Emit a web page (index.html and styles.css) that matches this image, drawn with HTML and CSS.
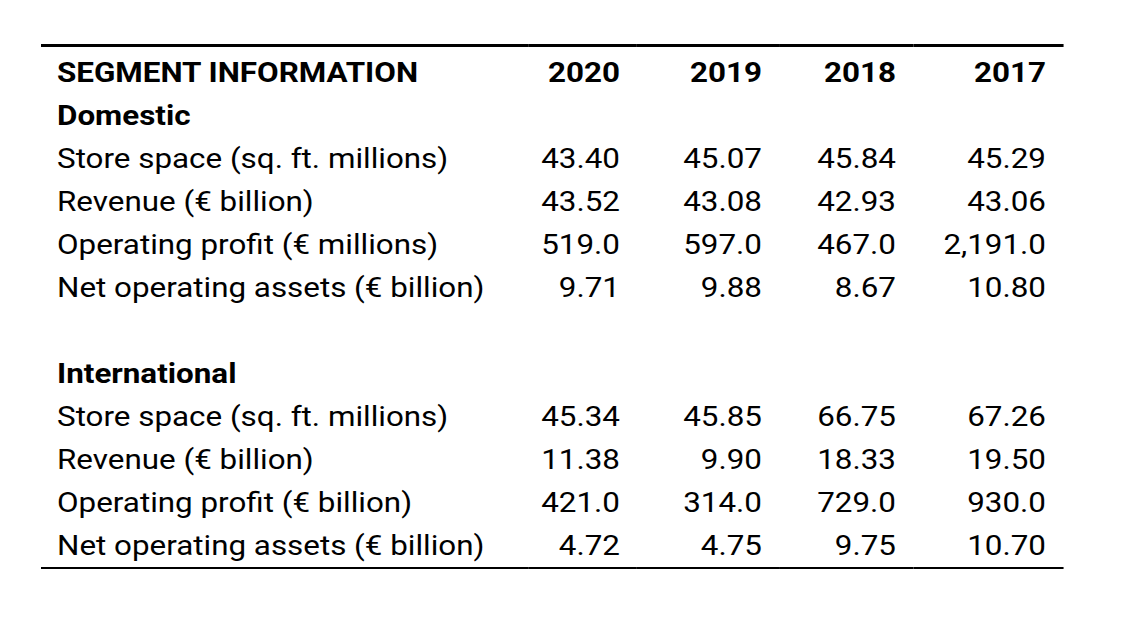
FILE: index.html
```html
<!DOCTYPE html>
<html lang="en">
<head>
<meta charset="utf-8">
<title>Segment information</title>
<link rel="stylesheet" href="styles.css">
</head>
<body>
<div class="page">
  <table class="seg">
    <colgroup>
      <col class="c-label">
      <col class="c-2020">
      <col class="c-2019">
      <col class="c-2018">
      <col class="c-2017">
    </colgroup>
    <thead>
      <tr class="head">
        <th class="label">SEGMENT INFORMATION</th>
        <th>2020</th>
        <th>2019</th>
        <th>2018</th>
        <th>2017</th>
      </tr>
    </thead>
    <tbody>
      <tr><td class="label group">Domestic</td><td></td><td></td><td></td><td></td></tr>
      <tr><td class="label">Store space (sq. ft. millions)</td><td>43.40</td><td>45.07</td><td>45.84</td><td>45.29</td></tr>
      <tr><td class="label">Revenue (€ billion)</td><td>43.52</td><td>43.08</td><td>42.93</td><td>43.06</td></tr>
      <tr><td class="label">Operating profit (€ millions)</td><td>519.0</td><td>597.0</td><td>467.0</td><td>2,191.0</td></tr>
      <tr><td class="label">Net operating assets (€ billion)</td><td>9.71</td><td>9.88</td><td>8.67</td><td>10.80</td></tr>
      <tr class="blank"><td class="label"></td><td></td><td></td><td></td><td></td></tr>
      <tr><td class="label group">International</td><td></td><td></td><td></td><td></td></tr>
      <tr><td class="label">Store space (sq. ft. millions)</td><td>45.34</td><td>45.85</td><td>66.75</td><td>67.26</td></tr>
      <tr><td class="label">Revenue (€ billion)</td><td>11.38</td><td>9.90</td><td>18.33</td><td>19.50</td></tr>
      <tr><td class="label">Operating profit (€ billion)</td><td>421.0</td><td>314.0</td><td>729.0</td><td>930.0</td></tr>
      <tr class="last"><td class="label">Net operating assets (€ billion)</td><td>4.72</td><td>4.75</td><td>9.75</td><td>10.70</td></tr>
    </tbody>
  </table>
</div>
</body>
</html>
```

FILE: styles.css
```css
html, body {
  margin: 0;
  padding: 0;
  background: #ffffff;
}

.page {
  padding: 44px 0 0 41px;
}

/* The source table is drawn horizontally stretched (about 1.12x),
   so the table is laid out at its natural width and widened. */
.seg {
  width: 912.5px;
  border-collapse: collapse;
  table-layout: fixed;
  font-family: Roboto, "Liberation Sans", Arial, sans-serif;
  font-size: 28px;
  color: #000000;
  border-top: 3px solid #000000;
  transform: scaleX(1.12);
  transform-origin: 0 0;
}

.c-label { width: 434.8px; }
.c-2020 { width: 97.3px; }
.c-2019 { width: 126.8px; }
.c-2018 { width: 119.7px; }
.c-2017 { width: 133.9px; }

.seg th,
.seg td {
  padding: 0 15.2px 0 0;
  height: 43px;
  line-height: 43px;
  text-align: right;
  white-space: nowrap;
  vertical-align: middle;
}

.seg .label {
  text-align: left;
  padding-left: 14.3px;
  padding-right: 0;
}

.seg thead th {
  font-weight: 700;
  height: 43px;
  padding-top: 4px;
}

.seg .group {
  font-weight: 700;
}

.seg tr.last td {
  border-bottom: 2px solid #000000;
}
```
